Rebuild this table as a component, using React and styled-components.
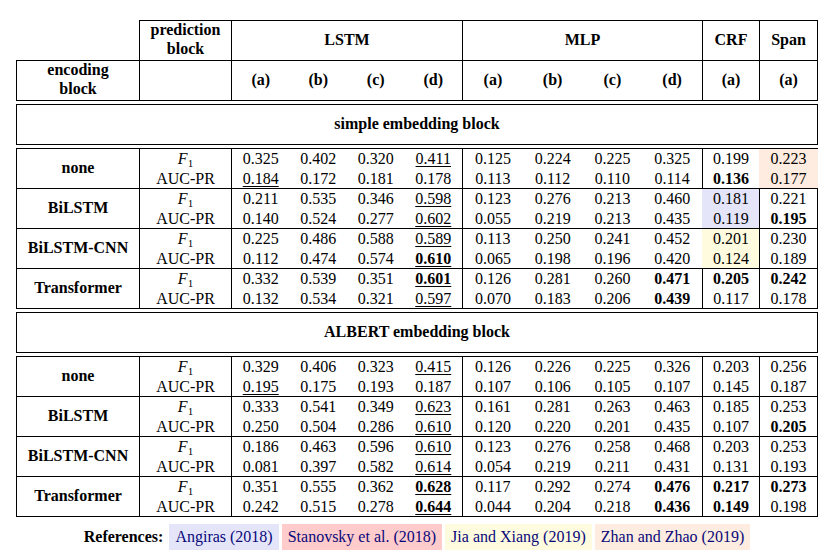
import React from "react";
import styled, { createGlobalStyle } from "styled-components";

const COLS = "123px 92px 231px 240px 57px 59px";

const LAVENDER = "#e5e5fa";
const PINK = "#ffcbcb";
const YELLOW = "#fffbdf";
const PEACH = "#fdecdf";

const GlobalStyle = createGlobalStyle`
  html, body {
    margin: 0;
    padding: 0;
    background: #fff;
  }
  body {
    font-family: "Liberation Serif", "Times New Roman", serif;
    font-size: 16px;
    color: #000;
  }
  * {
    box-sizing: border-box;
  }
`;

const Page = styled.div`
  width: 825px;
  height: 557px;
  padding: 20px 0 0 16px;
  overflow: hidden;
`;

const Table = styled.div`
  width: 802px;
`;

const HeaderGrid = styled.div`
  display: grid;
  grid-template-columns: ${COLS};
  grid-template-rows: 40px 41px;
`;

const HeadCell = styled.div`
  display: flex;
  align-items: center;
  justify-content: center;
  text-align: center;
  font-weight: bold;
  line-height: 19px;
  padding-bottom: ${(p) => (p.$twoLines ? "3px" : "2px")};
  border-top: ${(p) => (p.$blank ? "none" : "1px solid #000")};
  border-left: ${(p) => (p.$blank ? "none" : "1px solid #000")};
  border-right: ${(p) => (p.$last ? "1px solid #000" : "none")};
  border-bottom: ${(p) => (p.$bottom ? "1px solid #000" : "none")};
`;

const SubLabels = styled.div`
  width: 100%;
  display: grid;
  grid-template-columns: repeat(${(p) => p.$n}, 1fr);
  text-align: center;
`;

const Section = styled.div`
  margin-top: 3px;
  height: 41px;
  padding-bottom: 2px;
  border: 1px solid #000;
  display: flex;
  align-items: center;
  justify-content: center;
  font-weight: bold;
`;

const DataBlock = styled.div`
  margin-top: 3px;
  border-bottom: 1px solid #000;
`;

const GroupRow = styled.div`
  display: grid;
  grid-template-columns: ${COLS};
  height: 40px;
  border-top: 1px solid #000;
`;

const NameCell = styled.div`
  display: flex;
  align-items: center;
  justify-content: center;
  padding-bottom: 1px;
  font-weight: bold;
  border-left: 1px solid #000;
`;

const Cell = styled.div`
  display: grid;
  grid-template-columns: repeat(${(p) => p.$n || 1}, 1fr);
  grid-template-rows: 1fr 1fr;
  align-items: center;
  text-align: center;
  line-height: 19px;
  background: ${(p) => p.$bg || "transparent"};
  border-left: 1px solid ${(p) => p.$bg || "#000"};
  border-right: ${(p) => (p.$last ? `1px solid ${p.$bg || "#000"}` : "none")};
`;

const Value = styled.span`
  font-weight: ${(p) => (p.$b ? "bold" : "normal")};
  text-decoration: ${(p) => (p.$u ? "underline" : "none")};
  text-decoration-thickness: 1px;
  text-underline-offset: 2px;
`;

const Metric = styled.span`
  font-style: ${(p) => (p.$italic ? "italic" : "normal")};
`;

const Sub = styled.sub`
  font-style: normal;
  font-size: 11px;
  vertical-align: -3px;
  line-height: 0;
`;

const RefRow = styled.div`
  margin-top: 7px;
  display: flex;
  justify-content: center;
  align-items: center;
  gap: 3px;
`;

const RefLabel = styled.span`
  font-weight: bold;
  margin-right: 3px;
`;

const RefTag = styled.span`
  display: flex;
  align-items: center;
  height: 26px;
  padding: 0 6px 1px;
  background: ${(p) => p.$bg};
  color: #08087a;
`;

// value strings: "b" suffix = bold, "u" suffix = underlined
const simpleBlock = [
  {
    name: "none",
    f1: ["0.325", "0.402", "0.320", "0.411u", "0.125", "0.224", "0.225", "0.325", "0.199", "0.223"],
    auc: ["0.184u", "0.172", "0.181", "0.178", "0.113", "0.112", "0.110", "0.114", "0.136b", "0.177"],
    spanBg: PEACH,
  },
  {
    name: "BiLSTM",
    f1: ["0.211", "0.535", "0.346", "0.598u", "0.123", "0.276", "0.213", "0.460", "0.181", "0.221"],
    auc: ["0.140", "0.524", "0.277", "0.602u", "0.055", "0.219", "0.213", "0.435", "0.119", "0.195b"],
    crfBg: LAVENDER,
  },
  {
    name: "BiLSTM-CNN",
    f1: ["0.225", "0.486", "0.588", "0.589u", "0.113", "0.250", "0.241", "0.452", "0.201", "0.230"],
    auc: ["0.112", "0.474", "0.574", "0.610bu", "0.065", "0.198", "0.196", "0.420", "0.124", "0.189"],
    crfBg: YELLOW,
  },
  {
    name: "Transformer",
    f1: ["0.332", "0.539", "0.351", "0.601bu", "0.126", "0.281", "0.260", "0.471b", "0.205b", "0.242b"],
    auc: ["0.132", "0.534", "0.321", "0.597u", "0.070", "0.183", "0.206", "0.439b", "0.117", "0.178"],
  },
];

const albertBlock = [
  {
    name: "none",
    f1: ["0.329", "0.406", "0.323", "0.415u", "0.126", "0.226", "0.225", "0.326", "0.203", "0.256"],
    auc: ["0.195u", "0.175", "0.193", "0.187", "0.107", "0.106", "0.105", "0.107", "0.145", "0.187"],
  },
  {
    name: "BiLSTM",
    f1: ["0.333", "0.541", "0.349", "0.623u", "0.161", "0.281", "0.263", "0.463", "0.185", "0.253"],
    auc: ["0.250", "0.504", "0.286", "0.610u", "0.120", "0.220", "0.201", "0.435", "0.107", "0.205b"],
  },
  {
    name: "BiLSTM-CNN",
    f1: ["0.186", "0.463", "0.596", "0.610u", "0.123", "0.276", "0.258", "0.468", "0.203", "0.253"],
    auc: ["0.081", "0.397", "0.582", "0.614u", "0.054", "0.219", "0.211", "0.431", "0.131", "0.193"],
  },
  {
    name: "Transformer",
    f1: ["0.351", "0.555", "0.362", "0.628bu", "0.117", "0.292", "0.274", "0.476b", "0.217b", "0.273b"],
    auc: ["0.242", "0.515", "0.278", "0.644bu", "0.044", "0.204", "0.218", "0.436b", "0.149b", "0.198"],
  },
];

function V({ raw }) {
  const num = raw.replace(/[bu]+$/, "");
  const flags = raw.slice(num.length);
  return (
    <Value $b={flags.includes("b")} $u={flags.includes("u")}>
      {num}
    </Value>
  );
}

// cells of one column group, laid out column by column for two sub-rows
function Values({ f1, auc, from, n }) {
  const out = [];
  for (let i = from; i < from + n; i++) out.push(<V key={"f" + i} raw={f1[i]} />);
  for (let i = from; i < from + n; i++) out.push(<V key={"a" + i} raw={auc[i]} />);
  return out;
}

function Group({ row }) {
  return (
    <GroupRow>
      <NameCell>{row.name}</NameCell>
      <Cell>
        <Metric $italic>
          F<Sub>1</Sub>
        </Metric>
        <Metric>AUC-PR</Metric>
      </Cell>
      <Cell $n={4}>
        <Values f1={row.f1} auc={row.auc} from={0} n={4} />
      </Cell>
      <Cell $n={4}>
        <Values f1={row.f1} auc={row.auc} from={4} n={4} />
      </Cell>
      <Cell $bg={row.crfBg}>
        <Values f1={row.f1} auc={row.auc} from={8} n={1} />
      </Cell>
      <Cell $bg={row.spanBg} $last>
        <Values f1={row.f1} auc={row.auc} from={9} n={1} />
      </Cell>
    </GroupRow>
  );
}

function Header() {
  const labels = ["(a)", "(b)", "(c)", "(d)"];
  return (
    <HeaderGrid>
      <HeadCell $blank />
      <HeadCell $twoLines>
        prediction
        <br />
        block
      </HeadCell>
      <HeadCell>LSTM</HeadCell>
      <HeadCell>MLP</HeadCell>
      <HeadCell>CRF</HeadCell>
      <HeadCell $last>Span</HeadCell>

      <HeadCell $bottom $twoLines>
        encoding
        <br />
        block
      </HeadCell>
      <HeadCell $bottom />
      <HeadCell $bottom>
        <SubLabels $n={4}>
          {labels.map((l) => (
            <span key={l}>{l}</span>
          ))}
        </SubLabels>
      </HeadCell>
      <HeadCell $bottom>
        <SubLabels $n={4}>
          {labels.map((l) => (
            <span key={l}>{l}</span>
          ))}
        </SubLabels>
      </HeadCell>
      <HeadCell $bottom>(a)</HeadCell>
      <HeadCell $bottom $last>
        (a)
      </HeadCell>
    </HeaderGrid>
  );
}

export default function App() {
  return (
    <>
      <GlobalStyle />
      <Page>
        <Table>
          <Header />
          <Section>simple embedding block</Section>
          <DataBlock>
            {simpleBlock.map((r) => (
              <Group key={r.name} row={r} />
            ))}
          </DataBlock>
          <Section>ALBERT embedding block</Section>
          <DataBlock>
            {albertBlock.map((r) => (
              <Group key={r.name} row={r} />
            ))}
          </DataBlock>
          <RefRow>
            <RefLabel>References:</RefLabel>
            <RefTag $bg={LAVENDER}>Angiras (2018)</RefTag>
            <RefTag $bg={PINK}>Stanovsky et al. (2018)</RefTag>
            <RefTag $bg={YELLOW}>Jia and Xiang (2019)</RefTag>
            <RefTag $bg={PEACH}>Zhan and Zhao (2019)</RefTag>
          </RefRow>
        </Table>
      </Page>
    </>
  );
}
